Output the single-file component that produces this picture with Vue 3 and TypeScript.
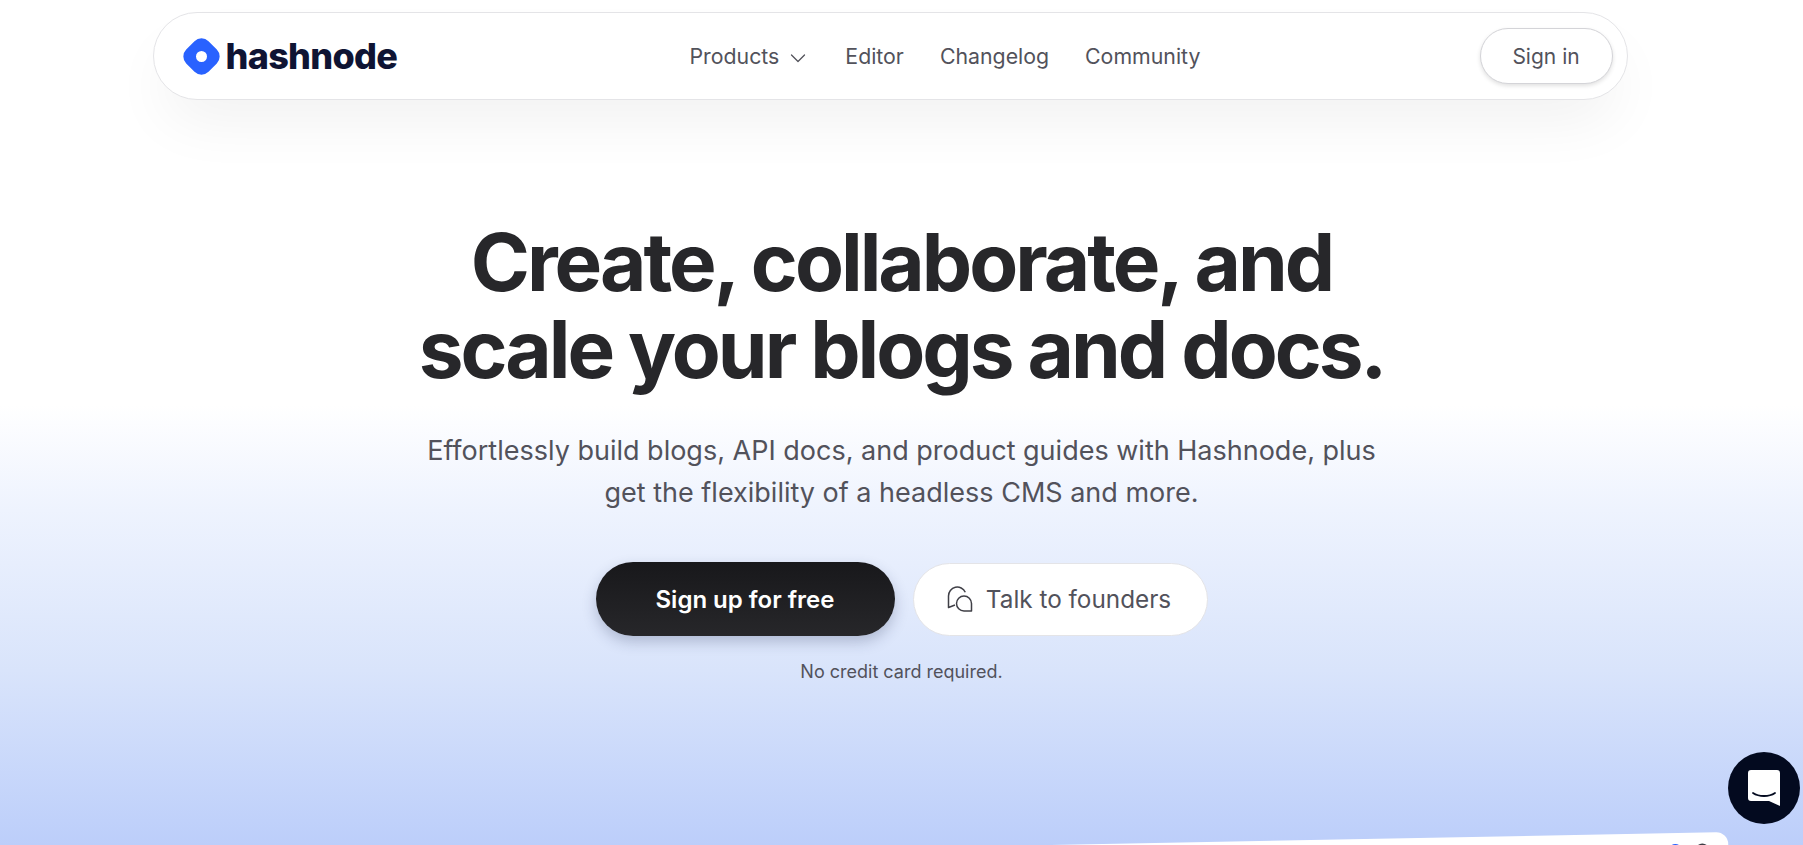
<template>
  <div class="page">
    <header class="nav-wrap">
      <nav class="nav">
        <a class="logo">
          <svg class="logo-mark" viewBox="0 0 37 37" width="37" height="37">
            <path fill-rule="evenodd" fill="#2962ff" d="M3.2 11.5 11.5 3.200a10 10 0 0 1 14 0l8.300 8.300a10 10 0 0 1 0 14l-8.300 8.300a10 10 0 0 1-14 0l-8.300-8.300a10 10 0 0 1 0-14ZM18.500 24a5.500 5.500 0 1 0 0-11 5.500 5.500 0 0 0 0 11Z" />
          </svg>
          <span class="logo-text">hashnode</span>
        </a>
        <ul class="links">
          <li class="link">
            Products
            <svg class="chevron" viewBox="0 0 18 18" width="18" height="18" fill="none" stroke="#52525b" stroke-width="1.300" stroke-linecap="round" stroke-linejoin="round">
              <path d="m2.500 6 6.500 6.500 6.500-6.500" />
            </svg>
          </li>
          <li v-for="item in links" :key="item" class="link">{{ item }}</li>
        </ul>
        <button class="sign-in">Sign in</button>
      </nav>
    </header>

    <main class="hero">
      <h1>Create, collaborate, and<br />scale your blogs and docs.</h1>
      <p class="lead">
        Effortlessly build blogs, API docs, and product guides with Hashnode, plus<br />
        get the flexibility of a headless CMS and more.
      </p>
      <div class="actions">
        <button class="btn-primary">Sign up for free</button>
        <button class="btn-secondary">
          <svg viewBox="0 0 28 28" width="28" height="28" fill="none" stroke="#3f3f46" stroke-width="1.500" stroke-linejoin="round">
            <path d="M9 20 2.500 22.500V11a8.800 8.800 0 0 1 16.800-3.800" />
            <path d="M18 11a7.500 7.500 0 1 0 0 15h7.500v-7.500A7.500 7.500 0 0 0 18 11Z" />
          </svg>
          Talk to founders
        </button>
      </div>
      <p class="note">No credit card required.</p>
    </main>

    <div class="preview">
      <span class="dot blue"></span>
      <span class="dot grey"></span>
    </div>

    <button class="chat" aria-label="Open chat">
      <svg viewBox="0 0 32 36" width="32" height="36">
        <path fill="#fff" d="M3 0h26a3 3 0 0 1 3 3v33l-11-5H3a3 3 0 0 1-3-3V3a3 3 0 0 1 3-3Z" />
        <path fill="none" stroke="#030a1f" stroke-width="1.800" stroke-linecap="round" d="M5 23c6 4 16 4 22 0" />
      </svg>
    </button>
  </div>
</template>

<script setup lang="ts">
const links: string[] = ['Editor', 'Changelog', 'Community']
</script>

<style>
html,
body {
  margin: 0;
  overflow: hidden;
}
</style>

<style scoped>
.page {
  position: relative;
  height: 845px;
  overflow: hidden;
  font-family: Inter, "Liberation Sans", sans-serif;
  background: linear-gradient(180deg, #fff 0, #fff 405px, #eef3fe 510px, #d9e4fb 670px, #bccefa 845px);
}

.nav-wrap {
  padding: 12px 23px 0 0;
  display: flex;
  justify-content: center;
}

.nav {
  width: 1475px;
  height: 88px;
  box-sizing: border-box;
  padding: 0 14px 0 29px;
  display: flex;
  align-items: center;
  position: relative;
  background: #fff;
  border: 1px solid #e4e4e7;
  border-radius: 44px;
  box-shadow: 0 30px 60px -10px rgba(0, 0, 0, 0.06);
}

.logo {
  display: flex;
  align-items: center;
  gap: 6px;
}

.logo-text {
  font-size: 36px;
  font-weight: 800;
  letter-spacing: -0.700px;
  color: #0f1433;
  line-height: 1;
}

.links {
  list-style: none;
  margin: 0;
  padding: 0;
  position: absolute;
  left: 536px;
  top: 0;
  height: 100%;
  display: flex;
  align-items: center;
  gap: 36px;
}

.link {
  display: flex;
  align-items: center;
  gap: 10px;
  font-size: 21.300px;
  color: #52525b;
}

.chevron {
  margin: 3px 2px 0 0;
}

.sign-in {
  margin-left: auto;
  width: 133px;
  height: 56px;
  font: inherit;
  font-size: 21px;
  color: #52525b;
  background: #fff;
  border: 1px solid #d4d4d8;
  border-radius: 28px;
  box-shadow: 0 2px 4px rgba(0, 0, 0, 0.12);
}

.hero {
  display: flex;
  flex-direction: column;
  align-items: center;
  text-align: center;
  padding-top: 118px;
}

h1 {
  margin: 0;
  font-size: 80px;
  line-height: 87px;
  font-weight: 650;
  letter-spacing: -3px;
  color: #27272a;
}

.lead {
  margin: 38px 0 0;
  font-size: 27px;
  line-height: 42px;
  color: #52525b;
}

.actions {
  margin-top: 48px;
  display: flex;
  align-items: center;
  gap: 18px;
}

.btn-primary {
  width: 299px;
  height: 74px;
  font: inherit;
  font-size: 24px;
  font-weight: 600;
  color: #fff;
  background: linear-gradient(180deg, #18181b, #27272a);
  border: none;
  border-radius: 37px;
  box-shadow: 0 6px 14px rgba(40, 50, 90, 0.25);
}

.btn-secondary {
  width: 295px;
  height: 73px;
  padding: 0 3px 0 0;
  display: flex;
  align-items: center;
  justify-content: center;
  gap: 12px;
  font: inherit;
  font-size: 24.300px;
  color: #52525b;
  background: #fff;
  border: 1px solid #e4e4e7;
  border-radius: 37px;
}

.note {
  margin: 24px 0 0;
  font-size: 18px;
  line-height: 24px;
  color: #52525b;
}

.preview {
  position: absolute;
  left: 528px;
  top: 832px;
  width: 1200px;
  height: 300px;
  background: #fff;
  border-radius: 12px;
  transform: rotate(-1.100deg);
  transform-origin: 100% 0;
}

.dot {
  position: absolute;
  top: 11px;
  width: 14px;
  height: 14px;
  border-radius: 50%;
}

.dot.blue {
  right: 46px;
  background: #2962ff;
}

.dot.grey {
  right: 19px;
  background: #3f3f46;
}

.chat {
  position: absolute;
  right: 3px;
  top: 752px;
  width: 72px;
  height: 72px;
  padding: 0;
  display: flex;
  align-items: center;
  justify-content: center;
  background: #030a1f;
  border: none;
  border-radius: 50%;
}
</style>
